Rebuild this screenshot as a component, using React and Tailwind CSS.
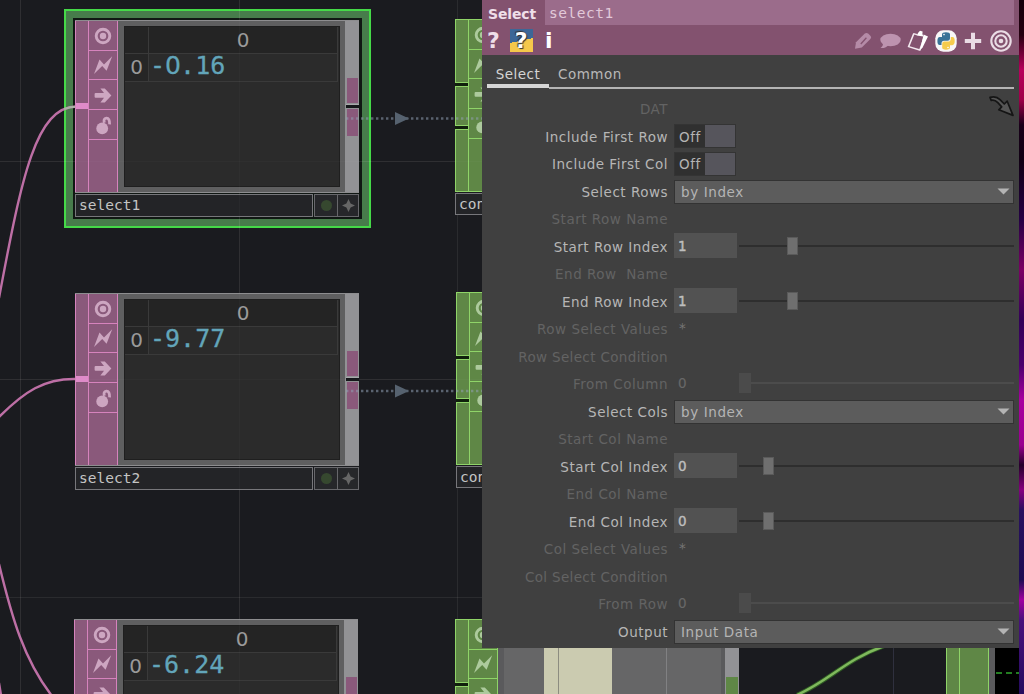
import React from "react";

const MONO = "font-['DejaVu_Sans_Mono',monospace]";
const SANS = "font-['DejaVu_Sans',sans-serif]";

const themes = {
  pink: {
    fill: "bg-[#8a597b]",
    border: "border-[#d683bd]",
    icon: "text-[#cda6c1]",
  },
  green: {
    fill: "bg-[#5f8746]",
    border: "border-[#8fd468]",
    icon: "text-[#adca9d]",
  },
};

function Bullseye() {
  return (
    <svg width="20" height="20" viewBox="0 0 20 20" fill="none" stroke="currentColor">
      <circle cx="10" cy="10" r="6.8" strokeWidth="2.9" />
      <circle cx="10" cy="10" r="3.2" fill="currentColor" stroke="none" />
    </svg>
  );
}

function Bolt() {
  return (
    <svg width="20" height="20" viewBox="0 0 20 20" fill="currentColor">
      <path d="M1 19 L6.5 4.5 L11 9.5 L19.2 1.2 L13.6 15.8 L9.2 10.9 Z" />
    </svg>
  );
}

function FlowArrow() {
  return (
    <svg width="20" height="20" viewBox="0 0 20 20" fill="currentColor">
      <path d="M2.6 8 H11 L7.4 3.4 H11.8 L18.4 10.4 L11.8 17.4 H7.4 L11 12.8 H2.6 Q1.6 12.8 1.6 11.8 V9 Q1.6 8 2.6 8 Z" />
    </svg>
  );
}

function OpenLock() {
  return (
    <svg width="20" height="20" viewBox="0 0 20 20" fill="currentColor">
      <circle cx="9.2" cy="13.4" r="5.9" />
      <path d="M11.4 7.8 Q10 3.6 13.4 3.2 Q16.8 3 16.6 9.4" fill="none" stroke="currentColor" strokeWidth="2.8" />
    </svg>
  );
}

function IconColumn({ t }) {
  const cell = `flex items-center justify-center border-b ${t.border} ${t.icon}`;
  return (
    <div className={`w-[30px] shrink-0 border-x ${t.border} ${t.fill}`}>
      <div className={`${cell} h-[30px]`}><Bullseye /></div>
      <div className={`${cell} h-[29px]`}><Bolt /></div>
      <div className={`${cell} h-[30px]`}><FlowArrow /></div>
      <div className={`${cell} h-[30px]`}><OpenLock /></div>
    </div>
  );
}

function SelectNode({ name, value, place }) {
  const t = themes.pink;
  return (
    <div className={`absolute w-[284px] ${place}`}>
      <div className="flex h-[173px] border-y border-[#8d8d8f] bg-[#5f5f60]">
        <div className={`w-[13px] shrink-0 border-l ${t.border} ${t.fill}`}>
          <div className="mt-[82px] h-[6px] bg-[#df8bc9]" />
        </div>
        <IconColumn t={t} />
        <div className="flex-1 pl-[6px] pr-[5px] pt-[5px] pb-[5px]">
          <div className="h-full border border-[#1f1f1f] bg-[#2b2b2b] text-[20px] leading-[20px] text-[#9a9a9a]">
            <div className="mr-[1px] grid grid-cols-[24px_1fr] grid-rows-[27px_28px] border-r border-[#3a3a3a]">
              <div className="border-b border-r border-[#3a3a3a] bg-[#242424]" />
              <div className={`flex items-center justify-center border-b border-[#3a3a3a] bg-[#242424] ${SANS}`}>0</div>
              <div className={`flex items-center justify-center border-b border-r border-[#3a3a3a] bg-[#262626] pb-[1px] ${SANS}`}>0</div>
              <div className={`flex items-center border-b border-[#3a3a3a] pb-[3px] pl-[1px] text-[25px] text-[#62a5ba] [-webkit-text-stroke:0.3px_#62a5ba] ${MONO}`}>
                {value.split(/(0)/).map((part, i) =>
                  part === "0" ? (
                    <span key={i} className={`tracking-[-0.9px] ${SANS}`}>0</span>
                  ) : (
                    <span key={i}>{part}</span>
                  )
                )}
              </div>
            </div>
          </div>
        </div>
        <div className="w-[14px] shrink-0 bg-[#929295] pt-[57px]">
          <div className="ml-[2px] mr-[1px] h-[25px] bg-[#8a597b]" />
          <div className="mt-[1px] ml-[1px] h-[4px] border-t border-[#a9a9ac] bg-[#15171a]" />
          <div className="ml-[2px] mr-[1px] mt-[1px] h-[27px] bg-[#8a597b]" />
        </div>
      </div>
      {name && (
        <div className="mt-[1px] flex h-[23px] gap-[1px]">
          <div className={`flex w-[238px] items-center border border-[#77777b] bg-[#232427] pl-[3px] text-[14.5px] leading-none text-[#c4c4c4] ${MONO}`}>{name}</div>
          <div className="flex flex-1 border border-[#67676b] bg-[#26272a]">
            <div className="flex w-[23px] items-center justify-center border-r border-[#67676b]">
              <div className="size-[11px] rounded-full bg-[#36482f]" />
            </div>
            <div className="flex flex-1 items-center justify-center text-[#666666]">
              <svg width="13" height="13" viewBox="0 0 13 13" fill="currentColor">
                <path d="M6.5 0 L8.6 4.4 L13 6.5 L8.6 8.6 L6.5 13 L4.4 8.6 L0 6.5 L4.4 4.4 Z" />
              </svg>
            </div>
          </div>
        </div>
      )}
    </div>
  );
}

function GreenNode({ place, name }) {
  const t = themes.green;
  const seg = `border border-r-0 ${t.border} ${t.fill}`;
  return (
    <div className={`absolute w-[60px] ${place}`}>
      <div className="flex h-[173px]">
        <div className="flex w-[13px] flex-col gap-[3px] bg-[#10200c]">
          <div className={`h-[64px] ${seg}`} />
          <div className={`h-[40px] ${seg}`} />
          <div className={`flex-1 ${seg}`} />
        </div>
        <div className={`flex border-y ${t.border}`}><IconColumn t={t} /></div>
      </div>
      {name && (
        <div className={`mt-[1px] flex h-[22px] items-center border border-[#77777b] bg-[#232427] pl-[3px] text-[14.5px] leading-none text-[#c4c4c4] ${MONO}`}>{name}</div>
      )}
    </div>
  );
}

function NetworkLines() {
  return (
    <svg className="absolute inset-0" width="1024" height="694" fill="none">
      <g stroke="#ffffff" strokeOpacity="0.07">
        <path d="M20.5 0V694 M239.5 0V694 M457.5 0V694 M0 161.5H482 M0 379.5H482 M0 597.5H482" />
      </g>
      <path d="M893.5 647V694" stroke="#2f303e" />
      <g stroke="#bd6fa5" strokeWidth="2.4">
        <path d="M77 106.5 C36 106.5 22 175 -1 298" />
        <path d="M77 379 C44 378 24 392 -1 417" />
        <path d="M-1 564 C12 618 24 660 52 696" />
        <path d="M-1 683 L1 695" />
      </g>
      <path d="M64 109 Q70 106.8 77 106.5" stroke="#a9b3a5" strokeWidth="2.2" />
      <path d="M797 695 C829 681 845 660 884 646" stroke="#2f5c24" strokeWidth="4.4" />
      <path d="M797 695 C829 681 845 660 884 646" stroke="#80b95d" strokeWidth="2.4" />
    </svg>
  );
}

function LinkLines() {
  return (
    <svg className="absolute inset-0" width="1024" height="694" fill="none">
      <path d="M20.5 0V694 M239.5 0V694 M0 161.5H482 M0 379.5H482" stroke="#ffffff" strokeOpacity="0.025" />
      {[118.5, 391].map((y) => (
        <g key={y}>
          <path d={`M346 ${y}H482`} stroke="#8f9fb2" strokeOpacity="0.55" strokeWidth="2.6" strokeDasharray="2.4 2.6" />
          <path d={`M395 ${y - 6.5}L409 ${y}L395 ${y + 6.5}Z`} fill="#56626f" />
        </g>
      ))}
    </svg>
  );
}

function LowerViewers() {
  return (
    <div className="absolute left-[498px] top-[640px] flex h-[54px] w-[521px]">
      <div className="w-[6px] bg-[#5a5a5c]" />
      <div className="w-[40px] bg-[#666667]" />
      <div className="w-[14px] bg-[#cbcbb0]" />
      <div className="w-[1px] bg-[#8c8c80]" />
      <div className="w-[53px] bg-[#cbcbb0]" />
      <div className="w-[54px] bg-[#666667]" />
      <div className="w-[1px] bg-[#818183]" />
      <div className="w-[54px] bg-[#666667]" />
      <div className="w-[4px] bg-[#5a5a5c]" />
      <div className="w-[14px] bg-[#929295] px-[1px] pt-[37px]">
        <div className="h-full bg-[#5f8746]" />
      </div>
      <div className="w-[207px]" />
      <div className="w-[14px] border-x border-[#8fd468] bg-[#5f8746]" />
      <div className="w-[29px] border-r border-[#8fd468] bg-[#5f8746]" />
      <div className="w-[6px] bg-[#5a5a5c]" />
      <div className="flex-1 bg-black pt-[32px]">
        <svg className="block" width="24" height="2">
          <path d="M1 1H24" stroke="#2fa72c" strokeWidth="1.4" strokeDasharray="6 4" />
        </svg>
      </div>
    </div>
  );
}

function Header() {
  return (
    <div className="h-[55px] bg-[#83526f] text-[#efdfe9]">
      <div className="flex h-[25px]">
        <div className={`flex w-[63px] items-center pl-[6px] pt-[3px] text-[14px] font-bold leading-none tracking-[-0.15px] ${SANS}`}>Select</div>
        <div className={`mr-[5px] flex flex-1 items-center bg-[#9b6c8b] pl-[4px] pt-[1px] text-[14.5px] leading-none text-[#e2c9d9] ${MONO}`}>select1</div>
      </div>
      <div className="flex h-[30px] items-center justify-between pl-[5px] pr-[6px]">
        <div className={`flex items-center text-[22px] font-bold leading-none ${SANS}`}>
          <span className="w-[23px] pt-[1px]">?</span>
          <div className="mt-[1px] flex size-[23px] items-center justify-center bg-[linear-gradient(168deg,#3c6797_50%,#f5c84b_50%)] text-[22px] text-white [text-shadow:1px_1px_1px_#333,-1px_-1px_1px_#333]">?</div>
          <span className="pl-[12px] pt-[1px] text-white">i</span>
        </div>
        <div className="flex items-center gap-[6px] pt-[1px]">
          <svg width="20" height="20" viewBox="0 0 20 20" fill="none">
            <path d="M2 17.8 L3 11.2 L11.8 2.6 Q13.6 1.2 15.4 2.8 L17.6 5 Q18.8 6.4 17.4 8 L8.8 16.4 Z" fill="#b58ba7" />
            <path d="M7.8 13 L13.4 6.8" stroke="#83526f" strokeWidth="1.3" />
          </svg>
          <svg width="22" height="20" viewBox="0 0 22 20" fill="#bd93af">
            <ellipse cx="11.5" cy="9" rx="10.2" ry="6.2" />
            <path d="M3 11 Q5.5 14 1.5 17 Q7 17.4 10 13.4 Z" />
          </svg>
          <svg width="22" height="22" viewBox="0 0 22 22" fill="none" stroke="#f3e8ef">
            <path d="M6.8 3.6 L1.6 16.6 L12.8 20 L17.2 7.4" strokeWidth="1.5" />
            <path d="M6.4 3.6 L10 4.6" strokeWidth="1.5" />
            <path d="M16.6 4.4 L21 6.4 L15.6 17.6 L13 20.2 Z" fill="#fff" stroke="none" />
            <path d="M9.6 5.4 L11.4 2.6 L13 .8 L15.6 1.6 L15.4 4 L16.4 6.6 Z" fill="#fff" stroke="none" />
          </svg>
          <svg width="22" height="22" viewBox="0 0 22 22">
            <rect x=".3" y=".3" width="21.4" height="21.4" rx="8" fill="#f8f6f7" />
            <path d="M7 7 V4.2 Q7 2.2 11 2.2 T15 4.2 V8.5 Q15 10.8 12.5 10.8 H9 Q6.5 10.8 6.5 13.4 V15 H4.6 Q2.4 15 2.4 11 T4.8 7 Z" fill="#397297" />
            <path d="M15.8 7 H17.4 Q19.7 7 19.7 11 T17.2 15.2 H15 V17.6 Q15 19.7 11 19.7 T7.2 17.6 V13.8 Q7.2 11.6 9.4 11.6 H13 Q15.8 11.6 15.8 8.8 Z" fill="#f5cb4d" />
            <circle cx="9" cy="4.6" r=".8" fill="#fff" />
            <circle cx="13" cy="17.5" r=".8" fill="#fff" />
          </svg>
          <svg width="20" height="20" viewBox="0 0 20 20" stroke="#eadce5" strokeWidth="4">
            <path d="M10 1.8V18.2 M1.8 10H18.2" />
          </svg>
          <svg width="24" height="24" viewBox="0 0 24 24" fill="none" stroke="#eadce5" strokeWidth="2.1">
            <circle cx="12" cy="12" r="9.7" />
            <circle cx="12" cy="12" r="5.7" />
            <circle cx="12" cy="12" r="2.3" fill="#eadce5" stroke="none" />
          </svg>
        </div>
      </div>
    </div>
  );
}

const rows = [
  { label: "DAT", off: true },
  { label: "Include First Row", toggle: true },
  { label: "Include First Col", toggle: true },
  { label: "Select Rows", menu: "by Index" },
  { label: "Start Row Name", off: true },
  { label: "Start Row Index", num: "1", at: 48 },
  { label: "End Row  Name", off: true },
  { label: "End Row Index", num: "1", at: 48 },
  { label: "Row Select Values", off: true, plain: "*" },
  { label: "Row Select Condition", off: true, tight: true },
  { label: "From Column", off: true, num: "0", at: 0 },
  { label: "Select Cols", menu: "by Index" },
  { label: "Start Col Name", off: true },
  { label: "Start Col Index", num: "0", at: 24 },
  { label: "End Col Name", off: true },
  { label: "End Col Index", num: "0", at: 24 },
  { label: "Col Select Values", off: true, plain: "*" },
  { label: "Col Select Condition", off: true, tight: true },
  { label: "From Row", off: true, num: "0", at: 0 },
  { label: "Output", menu: "Input Data" },
];

function Slider({ at, off }) {
  return (
    <div className="ml-[2px] flex flex-1 items-center">
      <div className={`h-[2px] ${off ? "bg-[#4c4c4c]" : "bg-[#2e2e2e]"}`} style={{ width: at }} />
      <div className={off ? "h-[20px] w-[12px] bg-[#4b4b4b]" : "h-[18px] w-[11px] border border-[#5a5a5a] bg-[#6f6f6f]"} />
      <div className={`h-[2px] flex-1 ${off ? "bg-[#4c4c4c]" : "bg-[#2e2e2e]"}`} />
    </div>
  );
}

function Control({ row }) {
  if (row.toggle) {
    return (
      <div className="mb-[1px] flex h-[24px] w-[62px] border border-[#343434] bg-[#303030]">
        <div className="flex w-[30px] items-center pl-[4px] pt-[2px] text-[#b4b4b4]">Off</div>
        <div className="flex-1 bg-[#56555c]" />
      </div>
    );
  }
  if (row.menu) {
    return (
      <div className="flex h-[24px] flex-1 items-center justify-between border border-[#333333] bg-[#5c5c5c] pl-[6px] pr-[3px] text-[#b4b4b4]">
        <span className="pt-[1px] tracking-[0.6px]">{row.menu}</span>
        <svg className="mb-[1px]" width="13" height="7" viewBox="0 0 13 7"><path d="M.5 .5H12.5L6.5 6.5Z" fill="#b4b4b4" /></svg>
      </div>
    );
  }
  if (row.num) {
    return (
      <div className="flex h-[25px] flex-1 items-center pb-[2px]">
        <div className={`flex h-[25px] w-[63px] shrink-0 items-center pl-[4px] pt-[1px] [-webkit-text-stroke:0.4px_currentColor] ${row.off ? "text-[#686868] [-webkit-text-stroke:0.15px_currentColor]" : "bg-[#525252] text-[#bebebe]"}`}>{row.num}</div>
        <Slider at={row.at} off={row.off} />
      </div>
    );
  }
  if (row.plain) return <span className="pb-[2px] pl-[5px] text-[#747474]">{row.plain}</span>;
  return null;
}

function ParameterPanel() {
  return (
    <div className={`absolute left-[482px] top-0 h-[648px] w-[537px] bg-[#404040] text-[13.5px] leading-none tracking-[0.5px] ${SANS}`}>
      <Header />
      <div className="mx-[5px] flex h-[34px] text-[#c6c6c6]">
        <div className="h-[33px] w-[62px] border-b-4 border-[#d6d6d6] pt-[13px] text-center text-[#d4d4d4]">Select</div>
        <div className="h-[34px] flex-1 border-b-2 border-[#b4b4b4] pl-[9px] pt-[13px] text-[#b8b8b8]">Common</div>
      </div>
      <div className="mt-[6.5px] pr-[5px]">
        {rows.map((row) => (
          <div key={row.label} className="flex h-[27.5px] items-center">
            <div className={`mr-[6px] w-[186px] whitespace-pre pt-[1.5px] text-right ${row.tight ? "tracking-[0.35px]" : ""} ${row.off ? "text-[#636363]" : "text-[#b6b6b6]"}`}>{row.label}</div>
            <Control row={row} />
          </div>
        ))}
      </div>
      <svg className="absolute right-[4px] top-[93px]" width="28" height="24" viewBox="0 0 28 24" fill="#555555" stroke="#151515" strokeWidth="1.7" strokeLinejoin="round">
        <path d="M3 4.4 Q9 2.6 13 6.6 L17.3 11 L20.2 8.2 L26 22.4 L11.8 16.8 L14.7 13.8 L10.8 9.6 Q7.6 6.4 4.2 7.4 Z" />
      </svg>
    </div>
  );
}

export default function App() {
  return (
    <div className="relative h-[694px] w-[1024px] overflow-hidden bg-[#1a1b1f]">
      <div className="absolute left-[64px] top-[9px] h-[219px] w-[307px] border-2 border-[#45d948] bg-[#477c4b] p-[7px]">
        <div className="h-full bg-[#101713]" />
      </div>
      <NetworkLines />
      <SelectNode name="select1" value="-0.16" place="left-[75px] top-[20px]" />
      <SelectNode name="select2" value="-9.77" place="left-[75px] top-[293px]" />
      <SelectNode value="-6.24" place="left-[74px] top-[619px]" />
      <GreenNode name="con" place="left-[455px] top-[19px]" />
      <GreenNode name="con" place="left-[456px] top-[292px]" />
      <GreenNode place="left-[455px] top-[619px]" />
      <LinkLines />
      <LowerViewers />
      <ParameterPanel />
      <div className="absolute right-0 top-0 h-full w-[5px] bg-[linear-gradient(to_bottom,#12000a_0px,#24000f_35px,#b8005c_70px,#9d0048_100px,#180019_125px,#100013_160px,#240044_220px,#7a0064_270px,#310057_320px,#4a006c_365px,#a800a0_400px,#99008f_445px,#24002a_465px,#86007f_490px,#28105f_510px,#1c0c52_580px,#a000a0_600px,#48107c_620px,#240b5e_694px)]" />
    </div>
  );
}
